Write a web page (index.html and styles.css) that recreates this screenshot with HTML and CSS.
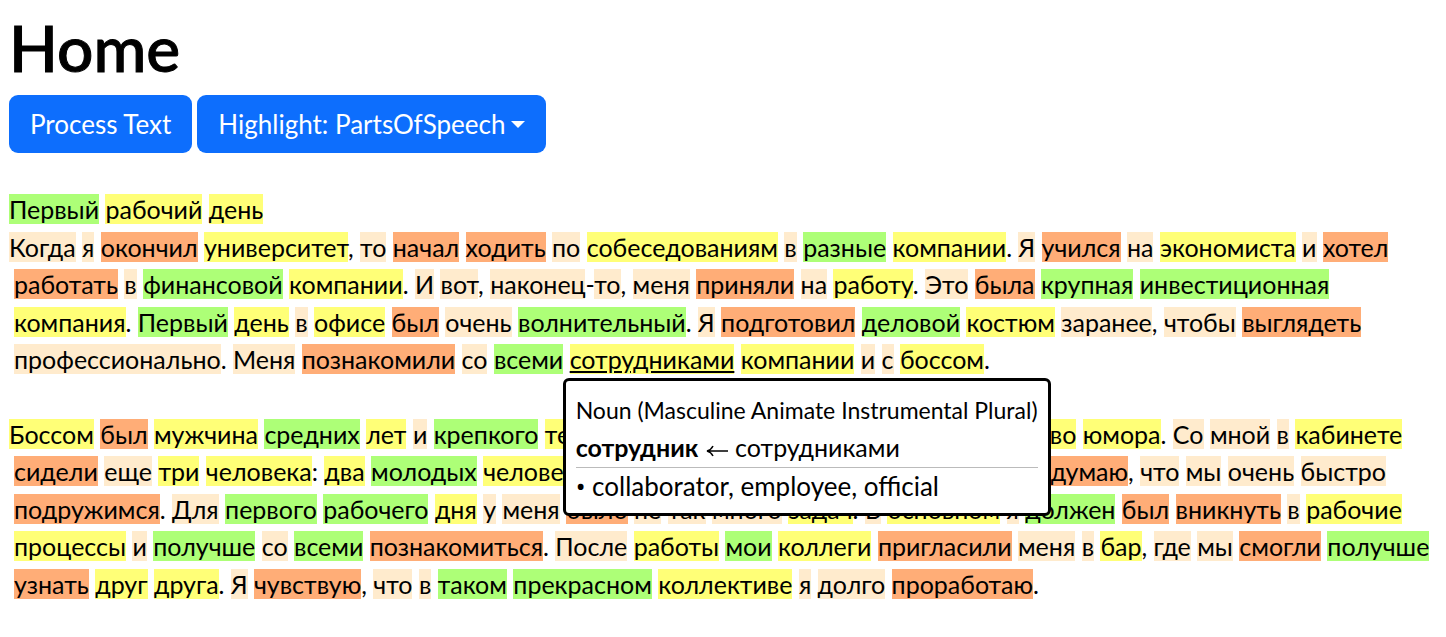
FILE: index.html
```html
<!DOCTYPE html>
<html lang="ru">
<head>
<meta charset="utf-8">
<title>Home</title>
<link rel="stylesheet" href="styles.css">
</head>
<body>
<main class="page">
<h1 class="title">Home</h1>
<div class="toolbar">
<button type="button" class="btn">Process Text</button>
<button type="button" class="btn btn-toggle" aria-haspopup="true">Highlight: PartsOfSpeech<span class="caret"></span></button>
</div>
<article class="text">
<p class="para">
<span class="line"><span class="adj">Первый</span> <span class="noun">рабочий</span> <span class="noun">день</span></span>
</p>
<p class="para">
<span class="line"><span class="other">Когда</span> <span class="other">я</span> <span class="verb">окончил</span> <span class="noun">университет</span>, <span class="other">то</span> <span class="verb">начал</span> <span class="verb">ходить</span> <span class="other">по</span> <span class="noun">собеседованиям</span> <span class="other">в</span> <span class="adj">разные</span> <span class="noun">компании</span>. <span class="other">Я</span> <span class="verb">учился</span> <span class="other">на</span> <span class="noun">экономиста</span> <span class="other">и</span> <span class="verb">хотел</span></span>
<span class="line"><span class="verb">работать</span> <span class="other">в</span> <span class="adj">финансовой</span> <span class="noun">компании</span>. <span class="other">И</span> <span class="other">вот</span>, <span class="other">наконец</span>-<span class="other">то</span>, <span class="other">меня</span> <span class="verb">приняли</span> <span class="other">на</span> <span class="noun">работу</span>. <span class="other">Это</span> <span class="verb">была</span> <span class="adj">крупная</span> <span class="adj">инвестиционная</span></span>
<span class="line"><span class="noun">компания</span>. <span class="adj">Первый</span> <span class="noun">день</span> <span class="other">в</span> <span class="noun">офисе</span> <span class="verb">был</span> <span class="other">очень</span> <span class="adj">волнительный</span>. <span class="other">Я</span> <span class="verb">подготовил</span> <span class="adj">деловой</span> <span class="noun">костюм</span> <span class="other">заранее</span>, <span class="other">чтобы</span> <span class="verb">выглядеть</span></span>
<span class="line"><span class="other">профессионально</span>. <span class="other">Меня</span> <span class="verb">познакомили</span> <span class="other">со</span> <span class="adj">всеми</span> <span class="anchor"><span class="noun active">сотрудниками</span><span class="popover" role="tooltip"><span class="grammar">Noun (Masculine Animate Instrumental Plural)</span><span class="lemma"><b>сотрудник</b> <svg class="arrow" viewBox="0 0 24 14" aria-label="from"><path d="M23 8H2M8 3Q6 7 2 8Q6 9 8 13" fill="none" stroke="currentColor" stroke-width="1.5"/></svg> сотрудниками</span><span class="meaning"><span class="bullet">•</span> collaborator, employee, official</span></span></span> <span class="noun">компании</span> <span class="other">и</span> <span class="other">с</span> <span class="noun">боссом</span>.</span>
</p>
<p class="para spaced">
<span class="line"><span class="noun">Боссом</span> <span class="verb">был</span> <span class="noun">мужчина</span> <span class="adj">средних</span> <span class="noun">лет</span> <span class="other">и</span> <span class="adj">крепкого</span> <span class="noun">телосложения</span>. <span class="other">У</span> <span class="other">него</span> <span class="verb">было</span> <span class="adj">отличное</span> <span class="noun">чувство</span> <span class="noun">юмора</span>. <span class="other">Со</span> <span class="other">мной</span> <span class="other">в</span> <span class="noun">кабинете</span></span>
<span class="line"><span class="verb">сидели</span> <span class="other">еще</span> <span class="noun">три</span> <span class="noun">человека</span>: <span class="noun">два</span> <span class="adj">молодых</span> <span class="noun">человека</span> <span class="other">и</span> <span class="noun">одна</span> <span class="other">очень</span> <span class="adj">симпатичная</span> <span class="noun">женщина</span>. <span class="other">Я</span> <span class="verb">думаю</span>, <span class="other">что</span> <span class="other">мы</span> <span class="other">очень</span> <span class="other">быстро</span></span>
<span class="line"><span class="verb">подружимся</span>. <span class="other">Для</span> <span class="adj">первого</span> <span class="adj">рабочего</span> <span class="noun">дня</span> <span class="other">у</span> <span class="other">меня</span> <span class="verb">было</span> <span class="other">не</span> <span class="other">так</span> <span class="other">много</span> <span class="noun">задач</span>. <span class="other">В</span> <span class="noun">основном</span> <span class="other">я</span> <span class="adj">должен</span> <span class="verb">был</span> <span class="verb">вникнуть</span> <span class="other">в</span> <span class="noun">рабочие</span></span>
<span class="line"><span class="noun">процессы</span> <span class="other">и</span> <span class="adj">получше</span> <span class="other">со</span> <span class="adj">всеми</span> <span class="verb">познакомиться</span>. <span class="other">После</span> <span class="noun">работы</span> <span class="adj">мои</span> <span class="noun">коллеги</span> <span class="verb">пригласили</span> <span class="other">меня</span> <span class="other">в</span> <span class="noun">бар</span>, <span class="other">где</span> <span class="other">мы</span> <span class="verb">смогли</span> <span class="adj">получше</span></span>
<span class="line"><span class="verb">узнать</span> <span class="noun">друг</span> <span class="noun">друга</span>. <span class="other">Я</span> <span class="verb">чувствую</span>, <span class="other">что</span> <span class="other">в</span> <span class="adj">таком</span> <span class="adj">прекрасном</span> <span class="noun">коллективе</span> <span class="other">я</span> <span class="other">долго</span> <span class="verb">проработаю</span>.</span>
</p>
</article>
</main>
</body>
</html>
```

FILE: styles.css
```css
* {
  box-sizing: border-box;
}

body {
  margin: 0;
  background: #fff;
  color: #000;
  font: 25px/1.5 Lato, "Noto Sans", sans-serif;
}

.page {
  padding: 10px 9px;
}

.title {
  margin: 0 0 10px;
  font-size: 64px;
  font-weight: 500;
  line-height: 75px;
  -webkit-text-stroke: 1px #000;
}

.toolbar {
  display: flex;
  gap: 5px;
  margin-bottom: 38px;
}

.btn {
  padding: 10px 21px;
  border: 0;
  border-radius: 9px;
  background: #0d6efd;
  color: #fff;
  font: inherit;
  font-size: 26px;
  line-height: 38px;
}

.btn-toggle {
  display: flex;
  align-items: center;
  gap: 6px;
}

.caret {
  border: 7px solid transparent;
  border-top-color: #fff;
  border-bottom: 0;
}

.para {
  margin: 0;
}

.spaced {
  margin-top: 37px;
}

.line {
  display: block;
  white-space: nowrap;
}

.line + .line {
  padding-left: 5px;
}

.adj {
  background: #adff77;
}

.noun {
  background: #ffff77;
}

.verb {
  background: #ffad77;
}

.other {
  background: #ffebcd;
}

.active {
  text-decoration: underline;
}

.anchor {
  position: relative;
}

.popover {
  position: absolute;
  z-index: 1;
  top: 34px;
  left: -7px;
  padding: 10px 10px 8px;
  border: 3px solid #000;
  border-radius: 6px;
  background: #fff;
}

.grammar,
.lemma,
.meaning {
  display: block;
}

.grammar {
  font-size: 23px;
  line-height: 38px;
}

.lemma {
  border-bottom: 1px solid #bbb;
}

.meaning {
  font-size: 26px;
  line-height: 37px;
}

.bullet {
  font-family: "Noto Sans", sans-serif;
}

.arrow {
  width: 24px;
  height: 14px;
}
```
